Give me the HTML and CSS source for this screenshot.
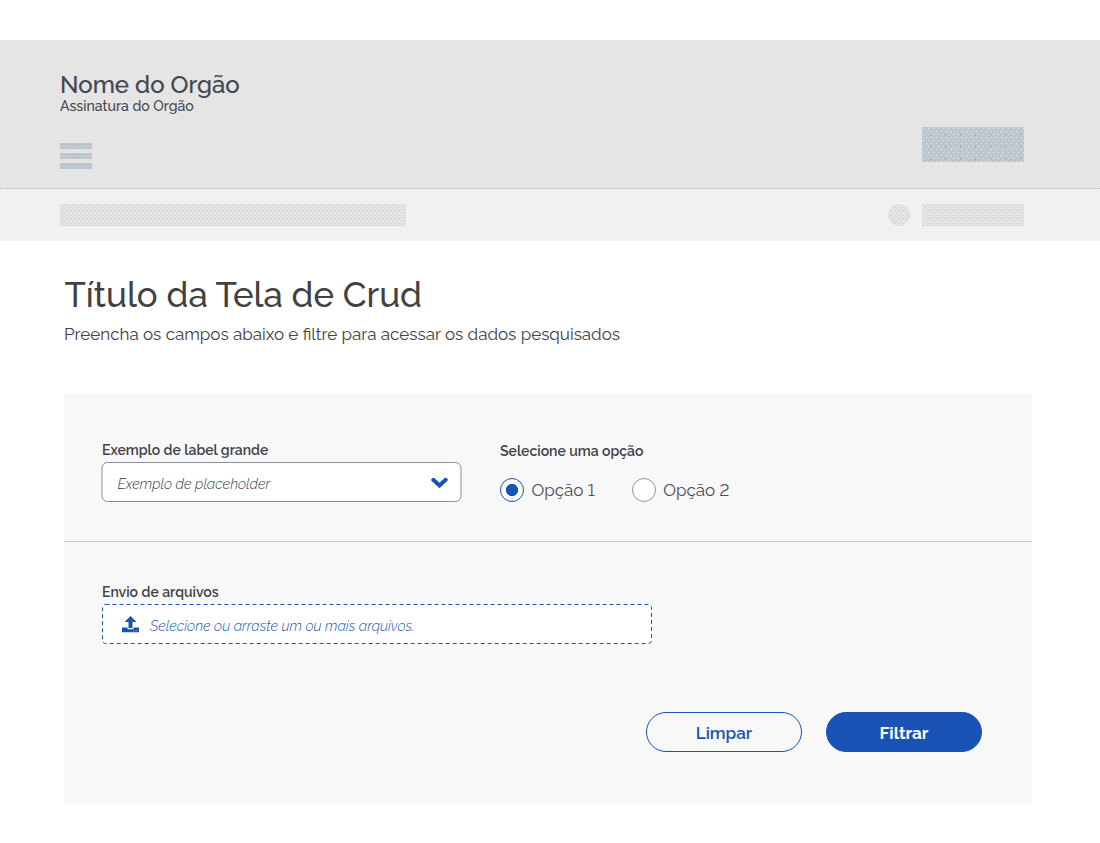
FILE: index.html
```html
<!DOCTYPE html>
<html lang="pt-BR">
<head>
<meta charset="utf-8">
<title>Título da Tela de Crud</title>
<link rel="stylesheet" href="styles.css">
</head>
<body>
<header class="header">
  <div class="brand">Nome do Orgão</div>
  <div class="signature">Assinatura do Orgão</div>
  <div class="header-row">
    <div class="burger"><i></i><i></i><i></i></div>
    <div class="header-action"></div>
  </div>
</header>
<div class="strip">
  <div class="skeleton crumb"></div>
  <div class="skeleton avatar"></div>
  <div class="skeleton user"></div>
</div>
<main class="main">
  <h1 class="title">Título da Tela de Crud</h1>
  <p class="subtitle">Preencha os campos abaixo e filtre para acessar os dados pesquisados</p>
  <form class="panel">
    <section class="fields">
      <div class="field">
        <div class="label label-select">Exemplo de label grande</div>
        <div class="select">
          <span class="placeholder">Exemplo de placeholder</span>
          <svg class="chevron" width="18" height="12" viewBox="0 0 18 12"><path d="M2.800 2.800 9 8.500l6.200-5.700" fill="none" stroke="#1853b5" stroke-width="4" stroke-linecap="round"/></svg>
        </div>
      </div>
      <div class="options">
        <div class="label label-options">Selecione uma opção</div>
        <div class="radios">
          <div class="radio radio-on"><i class="dot"></i><span>Opção 1</span></div>
          <div class="radio"><i class="dot"></i><span>Opção 2</span></div>
        </div>
      </div>
    </section>
    <section class="upload">
      <div class="label label-upload">Envio de arquivos</div>
      <div class="drop">
        <svg class="drop-border" width="550" height="40"><rect x=".5" y=".5" width="549" height="39" rx="3" fill="#fff" stroke="#1853b5" stroke-dasharray="4 3"/></svg>
        <svg class="upload-icon" width="17" height="17" viewBox="0 0 17 17"><path fill="#1853b5" fill-rule="evenodd" d="M8.500 0 14 5.500v.5h-3.500v6h-4V6H3v-.5zM0 11.500h5.500v.7q0 1 1 1h4q1 0 1-1v-.7H17v4.700H0zM11.300 14.500v.8h.8v-.8zm2.500 0v.8h.8v-.8z"/></svg>
        <span class="drop-text">Selecione ou arraste um ou mais arquivos.</span>
      </div>
    </section>
    <div class="actions">
      <button type="button" class="btn">Limpar</button>
      <button type="button" class="btn btn-primary">Filtrar</button>
    </div>
  </form>
</main>
</body>
</html>
```
FILE: styles.css
```css
* { box-sizing: border-box; }
body { margin: 0; padding-top: 40px; background: #fff; color: #414141; font-family: Raleway, Lato, sans-serif; font-feature-settings: "lnum"; white-space: nowrap; }
.header { height: 149px; padding: 30px 76px 0 60px; background: #e5e5e5; border-bottom: 1px dotted #b0bccb; color: #43474e; }
.brand { height: 28px; line-height: 29px; font-size: 24px; font-weight: 500; -webkit-text-stroke: .2px; }
.signature { height: 16px; line-height: 16px; font-size: 14.100px; font-weight: 500; }
.header-row { display: flex; justify-content: space-between; padding-top: 13px; }
.burger { display: flex; flex-direction: column; gap: 4px; padding-top: 16px; }
.burger i { width: 32px; height: 6px; background: radial-gradient(circle at 1.500px 3.500px, #dce1e5 .5px, transparent .7px) 1px 0 / 3px 6px #bdc5cf; }
.header-action { width: 102px; height: 35px; background: radial-gradient(circle at 1.500px 1.500px, #e1e4e8 .6px, transparent .8px) 0 0 / 5px 6px, radial-gradient(circle at 4.500px 4.500px, #e1e4e8 .6px, transparent .8px) 0 0 / 5px 6px, radial-gradient(circle at 8.500px 7.500px, #828b98 .6px, transparent .8px) 0 0 / 15px 12px, #bfc6d0; }
.strip { display: flex; align-items: center; height: 52px; padding: 0 76px 0 60px; background: #f1f1f1; }
.skeleton { height: 22px; background: radial-gradient(circle at 1.500px 1.500px, #bdc5cf .5px, transparent .8px) 0 0 / 4px 4px, radial-gradient(circle at 3.500px 3.500px, #c3c7cc .5px, transparent .8px) 0 0 / 4px 4px, #e5e5e5; }
.crumb { width: 346px; }
.avatar { width: 22px; border-radius: 50%; margin-left: auto; }
.user { width: 102px; margin-left: 12px; }
.main { padding: 32px 68px 0 64px; }
.title { height: 44px; margin: 0; padding-left: .6px; line-height: 43px; font-size: 34.800px; font-weight: 500; }
.subtitle { height: 24px; margin: 5px 0 48px; line-height: 24px; font-size: 17px; }
.panel { height: 409px; background: #f8f8f8; }
.fields { display: flex; gap: 38px; height: 148px; padding: 46px 38px 0; border-bottom: 1px solid #c6c8cb; }
.label { height: 20px; line-height: 20px; font-size: 14px; font-weight: 600; color: #3f4249; }
.field { width: 360px; }
.label-select { margin-bottom: 2px; }
.label-options { margin-top: 1px; }
.select { display: flex; align-items: center; justify-content: space-between; height: 40px; padding: 2px 12px 0 15px; border: 1px solid #888d98; border-radius: 6px; background: #fff; transform: translateX(-.5px); }
.placeholder { padding-top: 1px; font-size: 14.200px; font-weight: 300; font-style: italic; color: #343a45; }
.radios { display: flex; gap: 37px; margin-top: 17px; }
.radio { display: flex; align-items: center; gap: 7.500px; font-size: 17px; color: #4a4d53; }
.dot { width: 24px; height: 24px; border: 1px solid #8f949d; border-radius: 50%; background: #fff; }
.radio-on .dot { border-color: #1853b5; background: radial-gradient(circle, #1853b5 5.800px, #fff 6.400px); }
.upload { padding: 40px 38px 0; }
.label-upload { margin-bottom: 2px; }
.drop { position: relative; display: flex; align-items: center; width: 550px; height: 40px; padding-left: 20px; }
.drop-border { position: absolute; left: 0; top: 0; }
.upload-icon { position: relative; }
.drop-text { position: relative; margin: 3px 0 0 11px; font-size: 14.200px; font-weight: 300; font-style: italic; color: #1853b5; }
.actions { display: flex; justify-content: flex-end; gap: 24px; padding: 68px 50px 0 0; }
.btn { width: 156px; height: 40px; padding: 2px 0 0; border: 1px solid #1853b5; border-radius: 20px; background: transparent; color: #1853b5; font-family: Raleway, Lato, sans-serif; font-size: 17px; font-weight: 600; }
.btn-primary { background: #1853b5; color: #fff; font-weight: 700; }
```
